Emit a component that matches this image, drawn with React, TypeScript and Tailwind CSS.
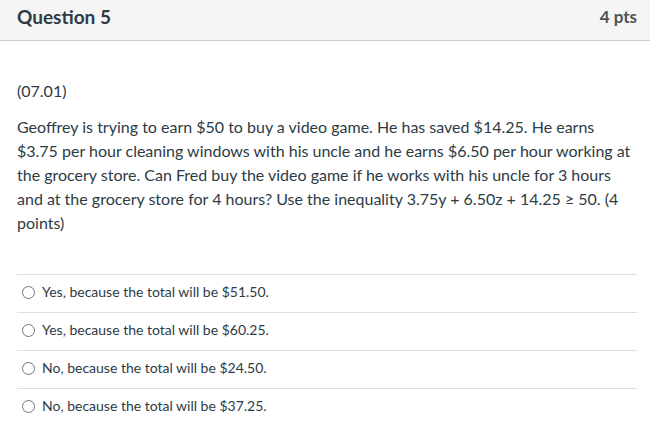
import React from "react";

const answers = [
  "Yes, because the total will be $51.50.",
  "Yes, because the total will be $60.25.",
  "No, because the total will be $24.50.",
  "No, because the total will be $37.25.",
];

export default function App() {
  return (
    <div
      className="w-[650px] h-[442px] bg-white text-[#2d3b45] overflow-hidden"
      style={{ fontFamily: "Lato, 'Helvetica Neue', Arial, sans-serif" }}
    >
      <div className="h-[41px] bg-[#f5f5f5] border-b border-[#c7cdd1] flex items-center justify-between pl-[17px] pr-[13px] pb-[8px]">
        <div className="text-[19px] font-bold leading-none">Question 5</div>
        <div className="text-[17px] font-bold leading-none text-[#4a5359]">4 pts</div>
      </div>
      <div className="pl-[17px] pr-[13px] pt-[38px]">
        <div className="text-[16px] leading-[24px]">(07.01)</div>
        <p className="mt-[12px] text-[16px] leading-[24px]">
          Geoffrey is trying to earn $50 to buy a video game. He has saved $14.25. He earns $3.75 per hour cleaning windows with his uncle and he earns $6.50 per hour working at the grocery store. Can Fred buy the video game if he works with his uncle for 3 hours and at the grocery store for 4 hours? Use the inequality 3.75y + 6.50z + 14.25 ≥ 50. (4 points)
        </p>
        <div className="mt-[39px]">
          {answers.map((a) => (
            <div key={a} className="h-[38px] border-t border-[#dcdfe1] flex items-center pl-[5px] pb-[4px]">
              <span className="w-[13px] h-[13px] rounded-full border border-[#6b7780] bg-white mr-[7px] shrink-0 mt-[2px]" />
              <span className="text-[14px] leading-none">{a}</span>
            </div>
          ))}
        </div>
      </div>
    </div>
  );
}
